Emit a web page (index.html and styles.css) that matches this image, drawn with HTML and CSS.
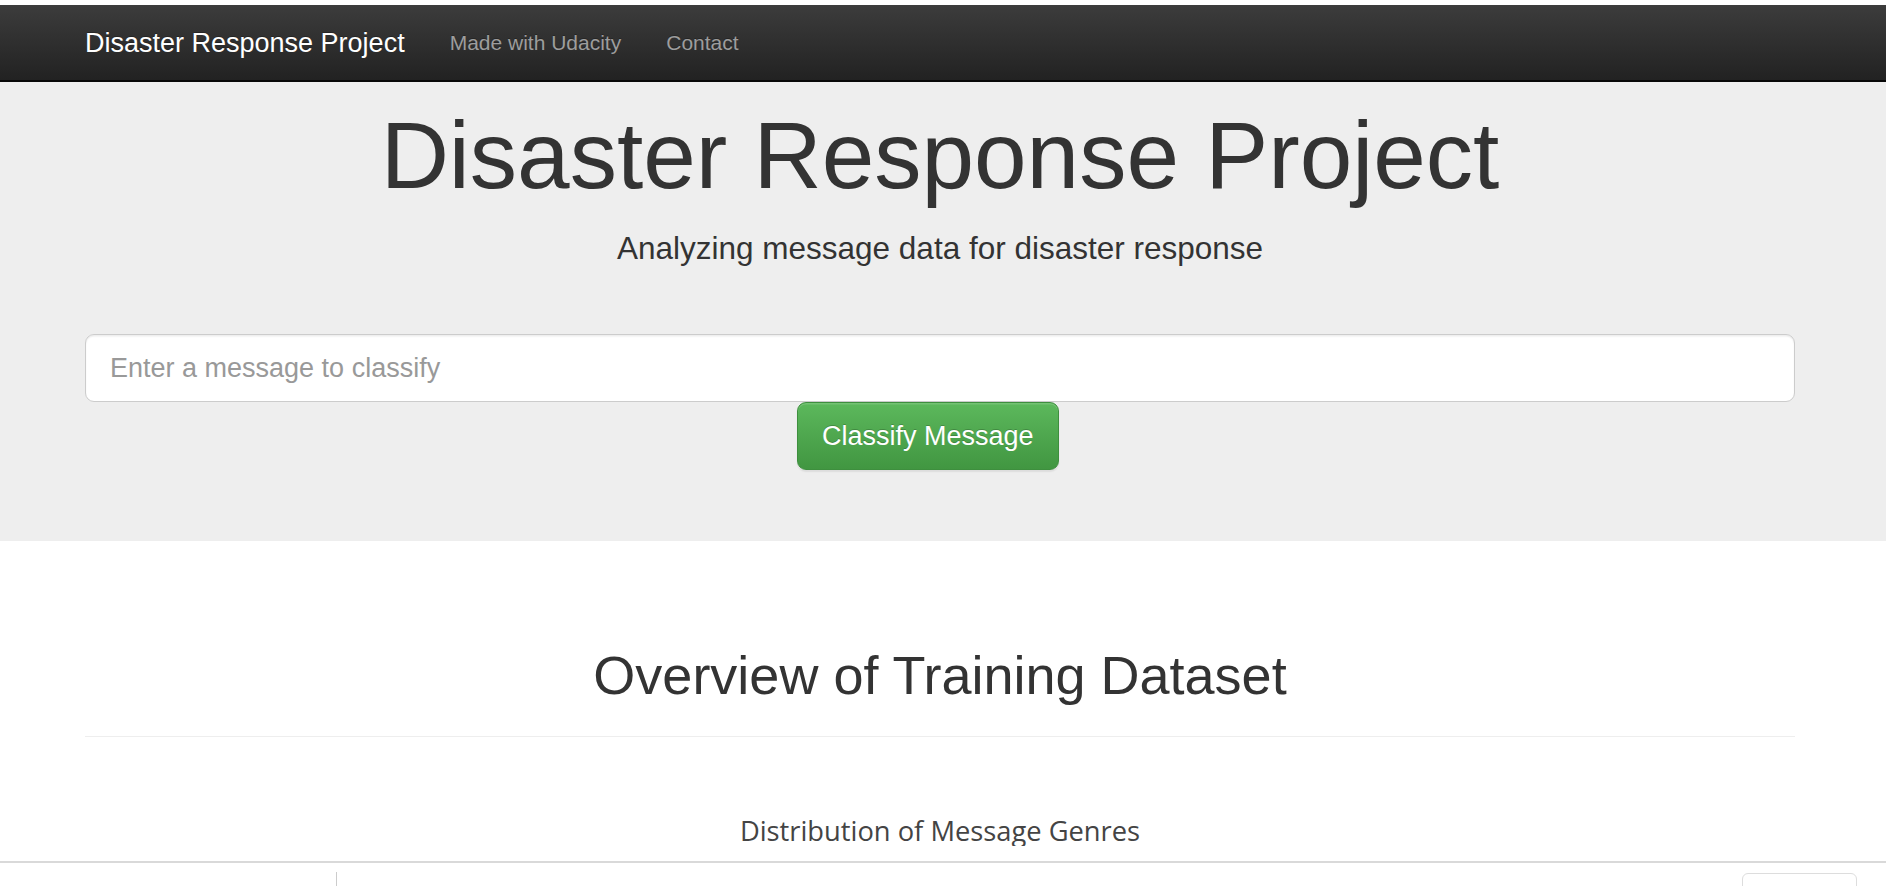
FILE: index.html
```html
<!DOCTYPE html>
<html lang="en">
<head>
<meta charset="utf-8">
<title>Disasters</title>
<link rel="stylesheet" href="styles.css">
</head>
<body>
<nav class="navbar">
  <div class="container nav-inner">
    <a class="brand" href="#">Disaster Response Project</a>
    <ul class="nav-links">
      <li><a href="#">Made with Udacity</a></li>
      <li><a href="#">Contact</a></li>
    </ul>
  </div>
</nav>

<div class="jumbotron">
  <div class="container">
    <h1 class="hero-title">Disaster Response Project</h1>
    <p class="hero-sub">Analyzing message data for disaster response</p>
    <form class="classify-form">
      <input class="msg-input" type="text" name="query" placeholder="Enter a message to classify">
      <div class="btn-row">
        <button type="button" class="btn-success">Classify Message</button>
      </div>
    </form>
  </div>
</div>

<div class="container">
  <div class="page-header">
    <h1 class="section-title">Overview of Training Dataset</h1>
  </div>
  <div class="chart">
    <div class="chart-title">Distribution of Message Genres</div>
  </div>
</div>

<div class="bottom-panel">
  <div class="panel-left"></div>
  <div class="panel-fill"></div>
  <div class="panel-box"></div>
</div>
</body>
</html>
```

FILE: styles.css
```css
html, body {
  margin: 0;
  padding: 0;
  background: #fff;
}
html {
  overflow: hidden;
}
body {
  font-family: "Liberation Sans", Arial, Helvetica, sans-serif;
  color: #333;
  padding-top: 5px;
}
.container {
  width: 1710px;
  margin-left: 85px;
}

/* navbar */
.navbar {
  height: 75px;
  background: linear-gradient(to bottom, #3c3c3c 0%, #222 100%);
  border-bottom: 2px solid #080808;
}
.nav-inner {
  display: flex;
  align-items: stretch;
  height: 75px;
}
.brand {
  display: block;
  font-size: 27px;
  line-height: 30px;
  padding: 22.5px 22.5px;
  margin-left: -22.5px;
  color: #fff;
  text-decoration: none;
  text-shadow: 0 -1px 0 rgba(0,0,0,.25);
}
.nav-links {
  list-style: none;
  margin: 0;
  padding: 0;
  display: flex;
}
.nav-links a {
  display: block;
  font-size: 21px;
  line-height: 30px;
  padding: 22.5px 22.5px;
  color: #9d9d9d;
  text-decoration: none;
  text-shadow: 0 -1px 0 rgba(0,0,0,.25);
}

/* jumbotron */
.jumbotron {
  background: #eee;
  padding: 20.5px 0 71px;
}
.hero-title {
  margin: 0;
  font-size: 94.5px;
  line-height: 104px;
  font-weight: 400;
  text-align: center;
  color: #333;
}
.hero-sub {
  margin: 19.25px 0 0;
  font-size: 31.5px;
  line-height: 45px;
  text-align: center;
  color: #333;
}
.classify-form {
  margin-top: 63.25px;
}
.msg-input {
  display: block;
  box-sizing: border-box;
  width: 100%;
  height: 68px;
  padding: 15px 24px;
  font-family: "Liberation Sans", Arial, sans-serif;
  font-size: 27px;
  line-height: 36px;
  color: #555;
  background: #fff;
  border: 1.5px solid #ccc;
  border-radius: 9px;
  box-shadow: inset 0 1.5px 1.5px rgba(0,0,0,.075);
  outline: none;
}
.msg-input::placeholder {
  color: #999;
}
.btn-row {
  padding-left: 712px;
}
.btn-success {
  display: inline-block;
  box-sizing: border-box;
  height: 68px;
  padding: 15px 24px;
  font-family: "Liberation Sans", Arial, sans-serif;
  font-size: 27px;
  line-height: 36px;
  color: #fff;
  background: linear-gradient(to bottom, #5cb85c 0%, #419641 100%);
  border: 1.5px solid #3e8f3e;
  border-radius: 9px;
  text-shadow: 0 -1px 0 rgba(0,0,0,.2);
  box-shadow: inset 0 1.5px 0 rgba(255,255,255,.15), 0 1.5px 1.5px rgba(0,0,0,.075);
  cursor: pointer;
}

/* overview */
.page-header {
  margin-top: 105.4px;
  padding-bottom: 30px;
  border-bottom: 1.5px solid #eee;
}
.section-title {
  margin: 0;
  font-size: 54px;
  line-height: 59.4px;
  font-weight: 400;
  text-align: center;
  color: #333;
}
.chart {
  margin-top: 79px;
}
.chart-title {
  font-family: "Open Sans", Verdana, Arial, sans-serif;
  font-size: 27.3px;
  line-height: 30px;
  text-align: center;
  color: #444;
}

/* bottom panel */
.bottom-panel {
  position: fixed;
  left: 0;
  right: 0;
  bottom: 0;
  height: 14px;
  background: #fff;
  border-top: 2px solid #d9d9d9;
  display: flex;
  align-items: flex-start;
  padding-top: 9px;
  overflow: hidden;
}
.panel-left {
  width: 336px;
  height: 40px;
  border-right: 1.5px solid #ccc;
}
.panel-fill {
  flex: 1;
}
.panel-box {
  width: 113px;
  height: 40px;
  margin-top: 1px;
  margin-right: 29px;
  border: 1.5px solid #ddd;
  border-radius: 6px;
}
```
